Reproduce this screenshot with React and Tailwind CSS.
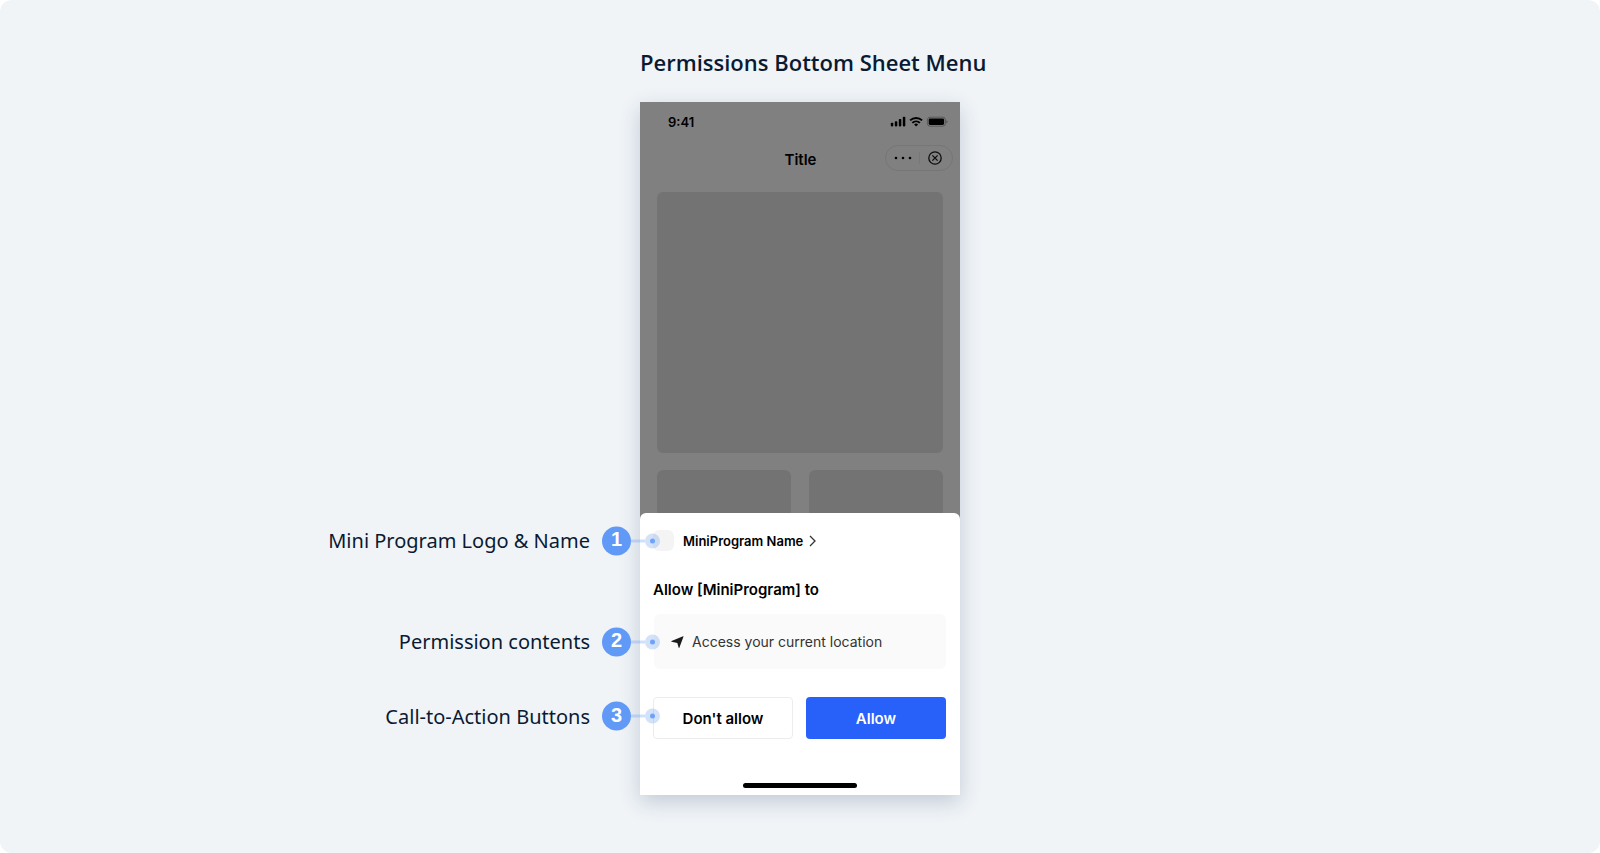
import React from "react";

function Callout({ number, label }) {
  return (
    <div className="pointer-events-none absolute top-1/2 right-[300px] z-10 flex -translate-y-1/2 items-center whitespace-nowrap">
      <span className="pr-3 font-['Noto_Sans',sans-serif] text-xl leading-7 text-[#0a1a33]">
        {label}
      </span>
      <span className="flex size-[29px] items-center justify-center rounded-full bg-[#6199f7] pb-1 font-['Liberation_Sans',sans-serif] text-xl leading-6 font-bold text-white">
        {number}
      </span>
      <span className="h-[3px] w-[14px] bg-[#6199f7]/30" />
      <span className="flex size-[15px] items-center justify-center rounded-full bg-[#4f86e8]/25">
        <span className="size-[5px] rounded-full bg-[#6ea3fa]" />
      </span>
    </div>
  );
}

function StatusIcons() {
  return (
    <svg width="58" height="12" viewBox="0 0 58 12" aria-hidden="true">
      <rect x="0.8" y="6.8" width="2.5" height="3.6" rx="0.8" />
      <rect x="4.8" y="5.2" width="2.5" height="5.2" rx="0.8" />
      <rect x="8.8" y="3" width="2.5" height="7.4" rx="0.8" />
      <rect x="12.8" y="0.8" width="2.5" height="9.6" rx="0.8" />
      <g fill="none" stroke="#000" strokeWidth="1.9">
        <path d="M20.1 4.4a8.7 8.7 0 0 1 12 0" />
        <path d="M22.3 6.9a5.5 5.5 0 0 1 7.6 0" />
      </g>
      <path d="M26.1 10.6 24.1 8.6a2.8 2.8 0 0 1 4 0z" />
      <rect x="37.4" y="1.2" width="18" height="9" rx="2.6" fill="none" stroke="#000" strokeOpacity="0.35" strokeWidth="0.9" />
      <rect x="38.7" y="2.4" width="15.4" height="6.6" rx="1.4" />
      <path d="M56.4 4.2v3c.7-.3 1.1-.8 1.1-1.5s-.4-1.2-1.1-1.5z" opacity="0.4" />
    </svg>
  );
}

function AppScreen() {
  return (
    <div className="flex h-[411px] flex-col overflow-hidden bg-[#808080] text-black">
      <div className="flex items-center justify-between pt-3 pr-3 pl-7">
        <span className="text-[13px] leading-4 font-semibold">9:41</span>
        <StatusIcons />
      </div>
      <div className="grid grid-cols-[1fr_auto_1fr] items-start pt-[15px] pr-[7px]">
        <h2 className="col-start-2 pl-2 text-[15px] leading-[30px] font-semibold">Title</h2>
        <div className="flex h-[26px] w-[68px] items-center justify-self-end rounded-full border border-[#767676] pr-px">
          <button type="button" aria-label="More" className="flex flex-1 justify-center pl-px">
            <svg width="18" height="4" viewBox="0 0 18 4" aria-hidden="true">
              <circle cx="2" cy="2" r="1.3" />
              <circle cx="9" cy="2" r="1.3" />
              <circle cx="16" cy="2" r="1.3" />
            </svg>
          </button>
          <span className="h-3 w-px bg-[#787878]" />
          <button type="button" aria-label="Close" className="flex flex-1 justify-center">
            <svg width="14" height="14" viewBox="0 0 14 14" fill="none" stroke="#0c0c0c" strokeWidth="1.3" aria-hidden="true">
              <circle cx="7" cy="7" r="6.2" />
              <path d="m4.4 4.4 5.2 5.2M9.6 4.4 4.4 9.6" />
            </svg>
          </button>
        </div>
      </div>
      <div className="grid grid-cols-2 gap-x-[18px] gap-y-[17px] px-[17px] pt-[17px]">
        <div className="col-span-2 h-[261px] rounded-md bg-[#737373]" />
        <div className="h-32 rounded-md bg-[#737373]" />
        <div className="h-32 rounded-md bg-[#737373]" />
      </div>
    </div>
  );
}

function PermissionSheet() {
  return (
    <section className="bg-[#808080]">
      <div className="rounded-t-md bg-white pb-[7px] text-black">
        <div className="relative flex items-center px-[13px] pt-[17px] pb-[17px]">
          <Callout number="1" label="Mini Program Logo & Name" />
          <span className="size-[21px] rounded-md bg-[#f4f4f4]" />
          <a href="#mini-program" className="flex items-center gap-[6px] pl-[9px] text-[13px] leading-5 font-semibold">
            MiniProgram Name
            <svg width="7" height="12" viewBox="0 0 7 12" fill="none" stroke="#333" strokeWidth="1.3" aria-hidden="true">
              <path d="M1 1l5 5-5 5" />
            </svg>
          </a>
        </div>
        <h3 className="px-[13px] pt-3 pb-[14px] text-[15px] leading-5 font-semibold">
          Allow [MiniProgram] to
        </h3>
        <div className="relative px-[14px]">
          <Callout number="2" label="Permission contents" />
          <div className="flex h-[55px] items-center gap-2 rounded-md bg-[#fafafa] px-[17px] text-sm text-[#333]">
            <svg width="13" height="14" viewBox="0 0 14 14" fill="#1c1c1c" aria-hidden="true">
              <path d="M13 .9c.4-.2.6.1.4.5L9 13.2c-.1.4-.6.4-.7 0L6.8 8.2.6 6.6c-.5-.1-.5-.6 0-.8z" />
            </svg>
            Access your current location
          </div>
        </div>
        <div className="relative grid grid-cols-2 gap-[13px] pt-7 pr-[14px] pl-[13px]">
          <div className="absolute top-7 right-0 left-0 h-[38px]">
            <Callout number="3" label="Call-to-Action Buttons" />
          </div>
          <button type="button" className="h-[42px] rounded border border-[#ececec] bg-white pt-[2px] text-[15px] font-semibold">
            Don't allow
          </button>
          <button type="button" className="h-[42px] rounded bg-[#2860fa] pt-[2px] text-[15px] font-semibold text-white">
            Allow
          </button>
        </div>
        <div className="mx-auto mt-11 h-[5px] w-[114px] rounded-full bg-black" />
      </div>
    </section>
  );
}

export default function App() {
  return (
    <div className="bg-white">
      <main className="flex min-h-screen flex-col items-center rounded-xl bg-[#f0f4f7] pt-[46px] pb-[58px]">
        <div className="w-80">
          <h1 className="pb-6 font-['Open_Sans',sans-serif] text-[22px] leading-8 font-semibold whitespace-nowrap text-[#0a1a33]">
            Permissions Bottom Sheet Menu
          </h1>
          <div className="font-['Inter',sans-serif] shadow-[0_7px_20px_rgba(20,40,90,0.2)]">
            <AppScreen />
            <PermissionSheet />
          </div>
        </div>
      </main>
    </div>
  );
}
